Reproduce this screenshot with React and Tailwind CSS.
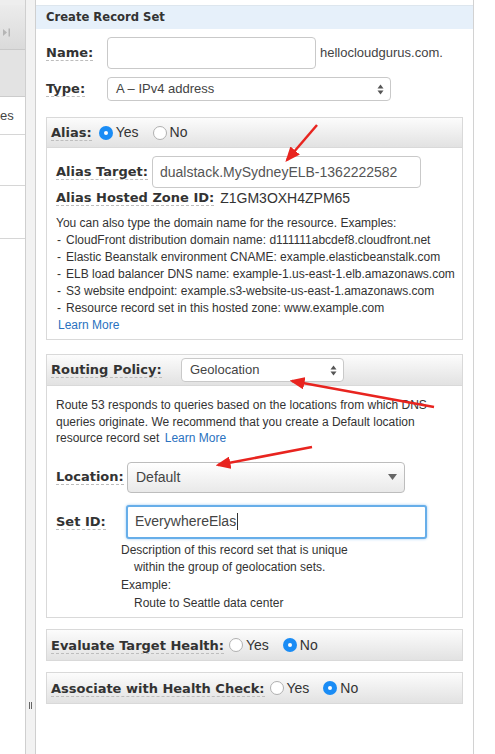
import React from "react";

const LBL = "font-['DejaVu_Sans',Verdana,sans-serif] font-bold text-[13px] text-[#333]";

function Label({ children, className = "" }) {
  return (
    <span className={`${LBL} ${className}`}>
      <span className="border-b border-dashed border-[#bdbdbd] leading-[15px] inline-block">{children}</span>
    </span>
  );
}

function Radio({ on }) {
  return on ? (
    <span className="w-[14px] h-[14px] rounded-full bg-[#1a8cf5] flex items-center justify-center shrink-0">
      <span className="block w-[4px] h-[4px] rounded-full bg-white" />
    </span>
  ) : (
    <span className="block w-[14px] h-[14px] rounded-full bg-white border border-[#b0b0b0] shrink-0" />
  );
}

function RadioPair({ yes }) {
  return (
    <span className="flex items-center text-[14px] text-[#333]">
      <Radio on={yes} />
      <span className="ml-[3px]">Yes</span>
      <span className="ml-[14px] flex"><Radio on={!yes} /></span>
      <span className="ml-[3px]">No</span>
    </span>
  );
}

function UpDown() {
  return (
    <svg width="7" height="11" viewBox="0 0 7 11" className="shrink-0">
      <path d="M3.5 0.5 L6.5 4.5 L0.5 4.5 Z" fill="#555" />
      <path d="M3.5 10.5 L6.5 6.5 L0.5 6.5 Z" fill="#555" />
    </svg>
  );
}

const HDR = "bg-gradient-to-b from-[#fcfcfc] to-[#e2e2e2]";

export default function App() {
  return (
    <div className="relative w-[495px] h-[754px] overflow-hidden bg-white flex font-['Liberation_Sans',Arial,sans-serif] text-[#333]">
      {/* sidebar */}
      <div className="w-[25px] shrink-0 flex flex-col bg-white">
        <div className="h-[5px] bg-[#eeeeee]" />
        <div className="h-[45px] bg-gradient-to-b from-[#ececec] to-[#dadada] border-b border-[#c9c9c9] flex items-center pl-[2px]">
          <svg width="9" height="9" viewBox="0 0 9 9" className="mt-[10px]">
            <path d="M1 1 L5 4.5 L1 8 Z" fill="#b5b5b5" />
            <rect x="6.5" y="0.5" width="1.5" height="8" fill="#b5b5b5" />
          </svg>
        </div>
        <div className="h-[47px] bg-[#e3e3e3] border-b border-[#cccccc]" />
        <div className="h-[38px] border-b border-[#d6d6d6] flex items-start pt-[9px]">
          <span className="text-[13px] whitespace-nowrap text-[#444]">es</span>
        </div>
        <div className="h-[51px] border-b border-[#d6d6d6]" />
        <div className="h-[53px] border-b border-[#d6d6d6]" />
      </div>

      {/* divider */}
      <div className="w-[11px] shrink-0 bg-[#f2f2f2] border-l border-r border-[#cfcfcf] flex flex-col items-center">
        <div className="mt-[702px] flex gap-[1px]">
          <span className="w-[1px] h-[7px] bg-[#666]" />
          <span className="w-[1px] h-[7px] bg-[#666]" />
        </div>
      </div>

      {/* main panel */}
      <div className="w-[438px] shrink-0 border-r border-[#d2d2d2] flex flex-col pt-[5px]">
        <div className="h-[24px] bg-[#e6f0fa] border-t border-[#dde6ee] flex items-center pl-[10px]">
          <span className="font-['DejaVu_Sans',Verdana,sans-serif] font-bold text-[11.6px] text-[#333]">Create Record Set</span>
        </div>

        <div className="px-[10px] flex flex-col">
          {/* Name */}
          <div className="mt-[8px] h-[32px] flex items-center">
            <Label className="w-[61px]">Name:</Label>
            <div className="w-[209px] h-[32px] border border-[#c9c9c9] rounded-[4px] bg-white" />
            <span className="ml-[4px] text-[13px] text-[#444]">hellocloudgurus.com.</span>
          </div>

          {/* Type */}
          <div className="mt-[8px] h-[24px] flex items-center">
            <Label className="w-[61px]">Type:</Label>
            <div className="w-[284px] h-[24px] border border-[#c9c9c9] rounded-[4px] bg-white flex items-center justify-between pl-[8px] pr-[6px]">
              <span className="text-[13px] text-[#444]">A – IPv4 address</span>
              <UpDown />
            </div>
          </div>

          {/* Alias box */}
          <div className="mt-[16px] w-[417px] border border-[#d9d9d9] flex flex-col">
            <div className={`h-[30px] ${HDR} border-b border-[#d9d9d9] flex items-center pl-[4px]`}>
              <Label>Alias:</Label>
              <span className="ml-[7px] flex"><RadioPair yes={true} /></span>
            </div>
            <div className="pl-[9px] pt-[8px] pb-[5px] flex flex-col">
              <div className="h-[32px] flex items-center">
                <Label className="w-[96px]">Alias Target:</Label>
                <div className="w-[269px] h-[32px] border border-[#c9c9c9] rounded-[4px] bg-white flex items-center pl-[7px] overflow-hidden">
                  <span className="text-[14px] text-[#555] whitespace-nowrap">dualstack.MySydneyELB-1362222582</span>
                </div>
              </div>
              <div className="mt-[1px] h-[18px] flex items-center">
                <Label>Alias Hosted Zone ID:</Label>
                <span className="ml-[6px] text-[14px] text-[#333]">Z1GM3OXH4ZPM65</span>
              </div>
              <div className="mt-[8px] text-[12px] leading-[17px] text-[#333]">
                <div>You can also type the domain name for the resource. Examples:</div>
                {[
                  "CloudFront distribution domain name: d111111abcdef8.cloudfront.net",
                  "Elastic Beanstalk environment CNAME: example.elasticbeanstalk.com",
                  "ELB load balancer DNS name: example-1.us-east-1.elb.amazonaws.com",
                  "S3 website endpoint: example.s3-website-us-east-1.amazonaws.com",
                  "Resource record set in this hosted zone: www.example.com",
                ].map((t) => (
                  <div key={t} className="flex whitespace-nowrap">
                    <span className="w-[10px] pl-[1px]">-</span>
                    <span>{t}</span>
                  </div>
                ))}
                <div className="pl-[2px] text-[#2a72c0]">Learn More</div>
              </div>
            </div>
          </div>

          {/* Routing Policy box */}
          <div className="mt-[14px] w-[417px] border border-[#d9d9d9] flex flex-col">
            <div className={`h-[31px] ${HDR} border-b border-[#d9d9d9] flex items-center pl-[4px]`}>
              <Label className="w-[130px]">Routing Policy:</Label>
              <div className="w-[163px] h-[24px] border border-[#c9c9c9] rounded-[4px] bg-white flex items-center justify-between pl-[8px] pr-[6px]">
                <span className="text-[13px] text-[#444]">Geolocation</span>
                <UpDown />
              </div>
            </div>
            <div className="pl-[9px] pt-[11px] pb-[5px] flex flex-col">
              <div className="text-[12px] leading-[16.5px] text-[#333]">
                <div className="whitespace-nowrap">Route 53 responds to queries based on the locations from which DNS</div>
                <div className="whitespace-nowrap">queries originate. We recommend that you create a Default location</div>
                <div className="whitespace-nowrap">resource record set <span className="ml-[2px] text-[#2a72c0]">Learn More</span></div>
              </div>
              <div className="mt-[15px] h-[31px] flex items-center">
                <Label className="w-[71px]">Location:</Label>
                <div className="w-[278px] h-[31px] border border-[#bdbdbd] rounded-[4px] bg-gradient-to-b from-[#ffffff] to-[#e9e9e9] flex items-center justify-between pl-[8px] pr-[7px]">
                  <span className="text-[14px] text-[#444]">Default</span>
                  <svg width="9" height="6" viewBox="0 0 9 6"><path d="M0 0 L9 0 L4.5 6 Z" fill="#666" /></svg>
                </div>
              </div>
              <div className="mt-[12px] h-[34px] flex items-center">
                <Label className="w-[70px]">Set ID:</Label>
                <div className="w-[301px] h-[34px] border-2 border-[#67aee9] rounded-[3px] bg-white shadow-[0_0_3px_#9ccaf2] flex items-center pl-[7px]">
                  <span className="text-[14px] text-[#444]">EverywhereElas</span>
                  <span className="w-[1px] h-[17px] bg-[#333] ml-[1px]" />
                </div>
              </div>
              <div className="mt-[3px] pl-[65px] text-[12px] leading-[17.7px] text-[#333]">
                <div>Description of this record set that is unique</div>
                <div className="pl-[13px]">within the group of geolocation sets.</div>
                <div>Example:</div>
                <div className="pl-[13px]">Route to Seattle data center</div>
              </div>
            </div>
          </div>

          {/* Evaluate Target Health */}
          <div className={`mt-[11px] w-[417px] h-[32px] border border-[#d9d9d9] ${HDR} flex items-center pl-[4px]`}>
            <Label>Evaluate Target Health:</Label>
            <span className="ml-[5px] flex"><RadioPair yes={false} /></span>
          </div>

          {/* Associate with Health Check */}
          <div className={`mt-[11px] w-[417px] h-[32px] border border-[#d9d9d9] ${HDR} flex items-center pl-[4px]`}>
            <Label>Associate with Health Check:</Label>
            <span className="ml-[5px] flex"><RadioPair yes={false} /></span>
          </div>
        </div>
      </div>

      <div className="flex-1 bg-white" />

      {/* annotation arrows */}
      <svg className="absolute inset-0 pointer-events-none" width="495" height="754" viewBox="0 0 495 754">
        <defs>
          <marker id="ah" markerWidth="6" markerHeight="5" refX="5" refY="2.5" orient="auto" markerUnits="strokeWidth">
            <path d="M0 0 L6 2.5 L0 5 Z" fill="#e8241f" />
          </marker>
        </defs>
        <line x1="317" y1="125" x2="287" y2="160" stroke="#e8241f" strokeWidth="2.5" markerEnd="url(#ah)" />
        <line x1="434" y1="407" x2="292" y2="381" stroke="#e8241f" strokeWidth="2.5" markerEnd="url(#ah)" />
        <line x1="312" y1="447" x2="218" y2="465" stroke="#e8241f" strokeWidth="2.5" markerEnd="url(#ah)" />
      </svg>
    </div>
  );
}
